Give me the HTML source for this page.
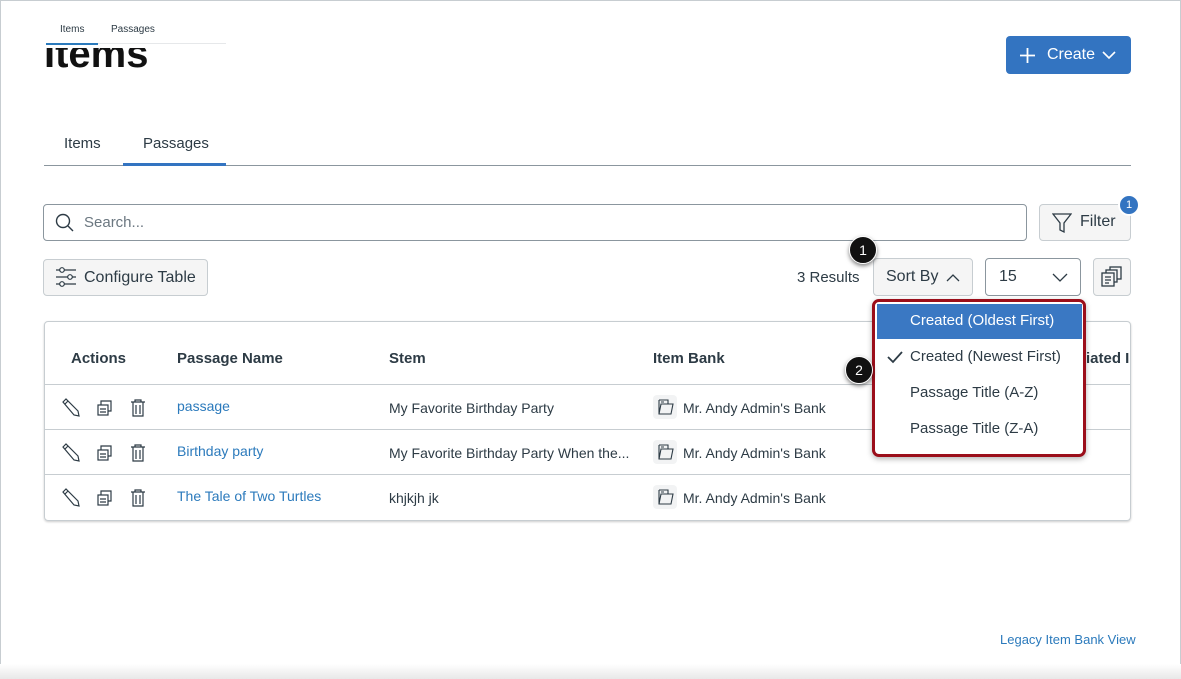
<!DOCTYPE html>
<html><head><meta charset="utf-8"><style>
*{box-sizing:border-box;margin:0;padding:0}
body{width:1181px;height:679px;background:#fff;font-family:"Liberation Sans",sans-serif;color:#2d3b45;position:relative;overflow:hidden}
.a{position:absolute;white-space:nowrap}
.frame{left:0;top:0;width:1181px;height:679px;border:1px solid #c7cdd1;border-bottom:none}
.btn{background:#f5f5f5;border:1px solid #c7cdd1;border-radius:4px}
.t{font-size:15px}
.link{color:#2b7abc;font-size:14px}
.row{left:45px;width:1085px;height:1px;background:#c7cdd1}
.cell{font-size:14px}
.badge{width:28px;height:28px;border-radius:50%;background:#111;color:#fff;font-size:14px;text-align:center;line-height:26px;box-shadow:0 2px 4px rgba(0,0,0,.5);border:1px solid #fff}
</style></head><body>
<div class="a frame"></div>
<div class="a" style="left:44px;top:48px;height:32px;overflow:hidden;width:120px"><div style="font-size:40px;font-weight:bold;color:#111;margin-top:-16px">Items</div></div>
<div class="a" style="left:60px;top:24px;font-size:10px">Items</div>
<div class="a" style="left:111px;top:24px;font-size:10px">Passages</div>
<div class="a" style="left:46px;top:43px;width:180px;height:1px;background:#e6e8ea"></div>
<div class="a" style="left:46px;top:43px;width:52px;height:2px;background:#2b7abc"></div>
<div class="a" style="left:1006px;top:36px;width:125px;height:38px;background:#3374c1;border-radius:4px;color:#fff;font-size:16px;line-height:38px">
<svg class="a" style="left:13px;top:11px" width="17" height="17"><path d="M8.5 1v15M1 8.5h15" stroke="#fff" stroke-width="1.8"/></svg>
<span class="a" style="left:41px;top:0">Create</span>
<svg class="a" style="left:96px;top:15px" width="14" height="9"><path d="M1 1l6 6 6-6" stroke="#fff" stroke-width="1.6" fill="none"/></svg></div>
<div class="a t" style="left:64px;top:135px">Items</div>
<div class="a t" style="left:143px;top:135px">Passages</div>
<div class="a" style="left:44px;top:165px;width:1087px;height:1px;background:#8b969e"></div>
<div class="a" style="left:123px;top:163px;width:103px;height:3px;background:#3374c1"></div>
<div class="a" style="left:43px;top:204px;width:984px;height:37px;border:1px solid #8b969e;border-radius:4px"></div>
<svg class="a" style="left:55px;top:213px" width="20" height="20"><circle cx="8" cy="8" r="6.5" stroke="#2d3b45" stroke-width="1.4" fill="none"/><path d="M13 13l5 5" stroke="#2d3b45" stroke-width="1.4"/></svg>
<div class="a t" style="left:84px;top:214px;color:#6b7780">Search...</div>
<div class="a btn" style="left:1039px;top:204px;width:92px;height:37px"></div>
<svg class="a" style="left:1052px;top:212px" width="20" height="22"><path d="M1 2h18l-7 9v9l-4-2v-7z" stroke="#2d3b45" stroke-width="1.3" fill="none"/></svg>
<div class="a" style="left:1080px;top:213px;font-size:16px">Filter</div>
<div class="a" style="left:1118px;top:194px;width:22px;height:22px;border-radius:50%;background:#3374c1;border:2px solid #fff;color:#fff;font-size:11px;text-align:center;line-height:18px">1</div>
<div class="a btn" style="left:43px;top:259px;width:165px;height:37px"></div>
<svg class="a" style="left:55px;top:267px" width="22" height="20"><g stroke="#2d3b45" stroke-width="1.2" fill="#fff"><path d="M1 3h20M1 10h20M1 17h20"/><circle cx="7" cy="3" r="2.3"/><circle cx="15" cy="10" r="2.3"/><circle cx="7" cy="17" r="2.3"/></g></svg>
<div class="a t" style="left:84px;top:269px;font-size:16px">Configure Table</div>
<div class="a t" style="left:797px;top:269px;font-size:15px">3 Results</div>
<div class="a btn" style="left:873px;top:258px;width:100px;height:38px"></div>
<div class="a" style="left:886px;top:268px;font-size:16px">Sort By</div>
<svg class="a" style="left:946px;top:273px" width="14" height="9"><path d="M1 8l6-6 6 6" stroke="#2d3b45" stroke-width="1.3" fill="none"/></svg>
<div class="a" style="left:985px;top:258px;width:96px;height:38px;border:1px solid #8b969e;border-radius:4px"></div>
<div class="a" style="left:999px;top:268px;font-size:16px">15</div>
<svg class="a" style="left:1052px;top:273px" width="16" height="9"><path d="M1 1l7 7 7-7" stroke="#2d3b45" stroke-width="1.3" fill="none"/></svg>
<div class="a btn" style="left:1093px;top:258px;width:38px;height:38px"></div>
<svg class="a" style="left:1101px;top:266px" width="22" height="22"><g stroke="#2d3b45" stroke-width="1.3" fill="#f5f5f5"><rect x="9" y="1" width="11" height="12"/><rect x="5" y="4" width="11" height="12"/><rect x="1" y="7" width="12" height="13"/><path d="M4 11h6M4 14h6M4 17h4"/></g></svg>
<div class="a" style="left:44px;top:321px;width:1087px;height:200px;border:1px solid #c7cdd1;border-radius:4px;box-shadow:0 1px 2px rgba(0,0,0,.2)"></div>
<div class="a" style="left:71px;top:350px;font-size:15px;font-weight:bold">Actions</div>
<div class="a" style="left:177px;top:350px;font-size:15px;font-weight:bold">Passage Name</div>
<div class="a" style="left:389px;top:350px;font-size:15px;font-weight:bold">Stem</div>
<div class="a" style="left:653px;top:350px;font-size:15px;font-weight:bold">Item Bank</div>
<div class="a" style="left:1086px;top:350px;font-size:15px;font-weight:bold;width:44px;overflow:hidden">iated I</div>
<div class="a row" style="top:384px"></div>
<div class="a row" style="top:429px"></div>
<div class="a row" style="top:474px"></div>
<div class="a" style="left:0;top:384px">
 <svg class="a" style="left:61px;top:14px" width="120" height="20"><g stroke="#2d3b45" stroke-width="1.2" fill="none"><path d="M2 4l3-3 12 12 1 5-5-1z M4 6l3-3"/><rect x="37" y="7" width="10" height="10"/><path d="M40 7V3h10v10h-3M39 11h6M39 14h6"/><path d="M70 4h14M74 4V2h6v2M72 4v14h10V4M75 7v9M79 7v9"/></g></svg>
 <div class="a link" style="left:177px;top:14px">passage</div>
 <div class="a cell" style="left:389px;top:16px">My Favorite Birthday Party</div>
</div>
<div class="a" style="left:0;top:429px">
 <svg class="a" style="left:61px;top:14px" width="120" height="20"><g stroke="#2d3b45" stroke-width="1.2" fill="none"><path d="M2 4l3-3 12 12 1 5-5-1z M4 6l3-3"/><rect x="37" y="7" width="10" height="10"/><path d="M40 7V3h10v10h-3M39 11h6M39 14h6"/><path d="M70 4h14M74 4V2h6v2M72 4v14h10V4M75 7v9M79 7v9"/></g></svg>
 <div class="a link" style="left:177px;top:14px">Birthday party</div>
 <div class="a cell" style="left:389px;top:16px">My Favorite Birthday Party When the...</div>
</div>
<div class="a" style="left:0;top:474px">
 <svg class="a" style="left:61px;top:14px" width="120" height="20"><g stroke="#2d3b45" stroke-width="1.2" fill="none"><path d="M2 4l3-3 12 12 1 5-5-1z M4 6l3-3"/><rect x="37" y="7" width="10" height="10"/><path d="M40 7V3h10v10h-3M39 11h6M39 14h6"/><path d="M70 4h14M74 4V2h6v2M72 4v14h10V4M75 7v9M79 7v9"/></g></svg>
 <div class="a link" style="left:177px;top:14px">The Tale of Two Turtles</div>
 <div class="a cell" style="left:389px;top:16px">khjkjh jk</div>
</div>
<div class="a" style="left:653px;top:395px;width:24px;height:24px;background:#f2f3f4;border-radius:4px"></div>
<div class="a" style="left:653px;top:440px;width:24px;height:24px;background:#f2f3f4;border-radius:4px"></div>
<div class="a" style="left:653px;top:485px;width:24px;height:24px;background:#f2f3f4;border-radius:4px"></div>
<svg class="a" style="left:655px;top:397px" width="20" height="110"><g stroke="#2d3b45" stroke-width="1.1" fill="none"><path d="M4 3h9v4M4 3v14h12l2-10H6L4 17M6 5h3"/><path transform="translate(0 45)" d="M4 3h9v4M4 3v14h12l2-10H6L4 17M6 5h3"/><path transform="translate(0 90)" d="M4 3h9v4M4 3v14h12l2-10H6L4 17M6 5h3"/></g></svg>
<div class="a cell" style="left:683px;top:400px">Mr. Andy Admin's Bank</div>
<div class="a cell" style="left:683px;top:445px">Mr. Andy Admin's Bank</div>
<div class="a cell" style="left:683px;top:490px">Mr. Andy Admin's Bank</div>
<div class="a" style="left:872px;top:299px;width:214px;height:158px;border:3px solid #9b0e1a;border-radius:7px;background:#fff;box-shadow:0 2px 6px rgba(0,0,0,.3)"></div>
<div class="a" style="left:877px;top:304px;width:205px;height:35px;background:#3a78c3"></div>
<div class="a" style="left:910px;top:312px;font-size:15px;color:#fff">Created (Oldest First)</div>
<svg class="a" style="left:887px;top:350px" width="16" height="14"><path d="M1 7l5 5 9-10" stroke="#2d3b45" stroke-width="1.8" fill="none"/></svg>
<div class="a" style="left:910px;top:348px;font-size:15px">Created (Newest First)</div>
<div class="a" style="left:910px;top:384px;font-size:15px">Passage Title (A-Z)</div>
<div class="a" style="left:910px;top:420px;font-size:15px">Passage Title (Z-A)</div>
<div class="a badge" style="left:849px;top:236px">1</div>
<div class="a badge" style="left:845px;top:356px">2</div>
<div class="a" style="left:1000px;top:632px;font-size:13px;color:#2b7abc">Legacy Item Bank View</div>
<div class="a" style="left:0;top:664px;width:1181px;height:15px;background:linear-gradient(#fff,#e8e8e8)"></div>
</body></html>
